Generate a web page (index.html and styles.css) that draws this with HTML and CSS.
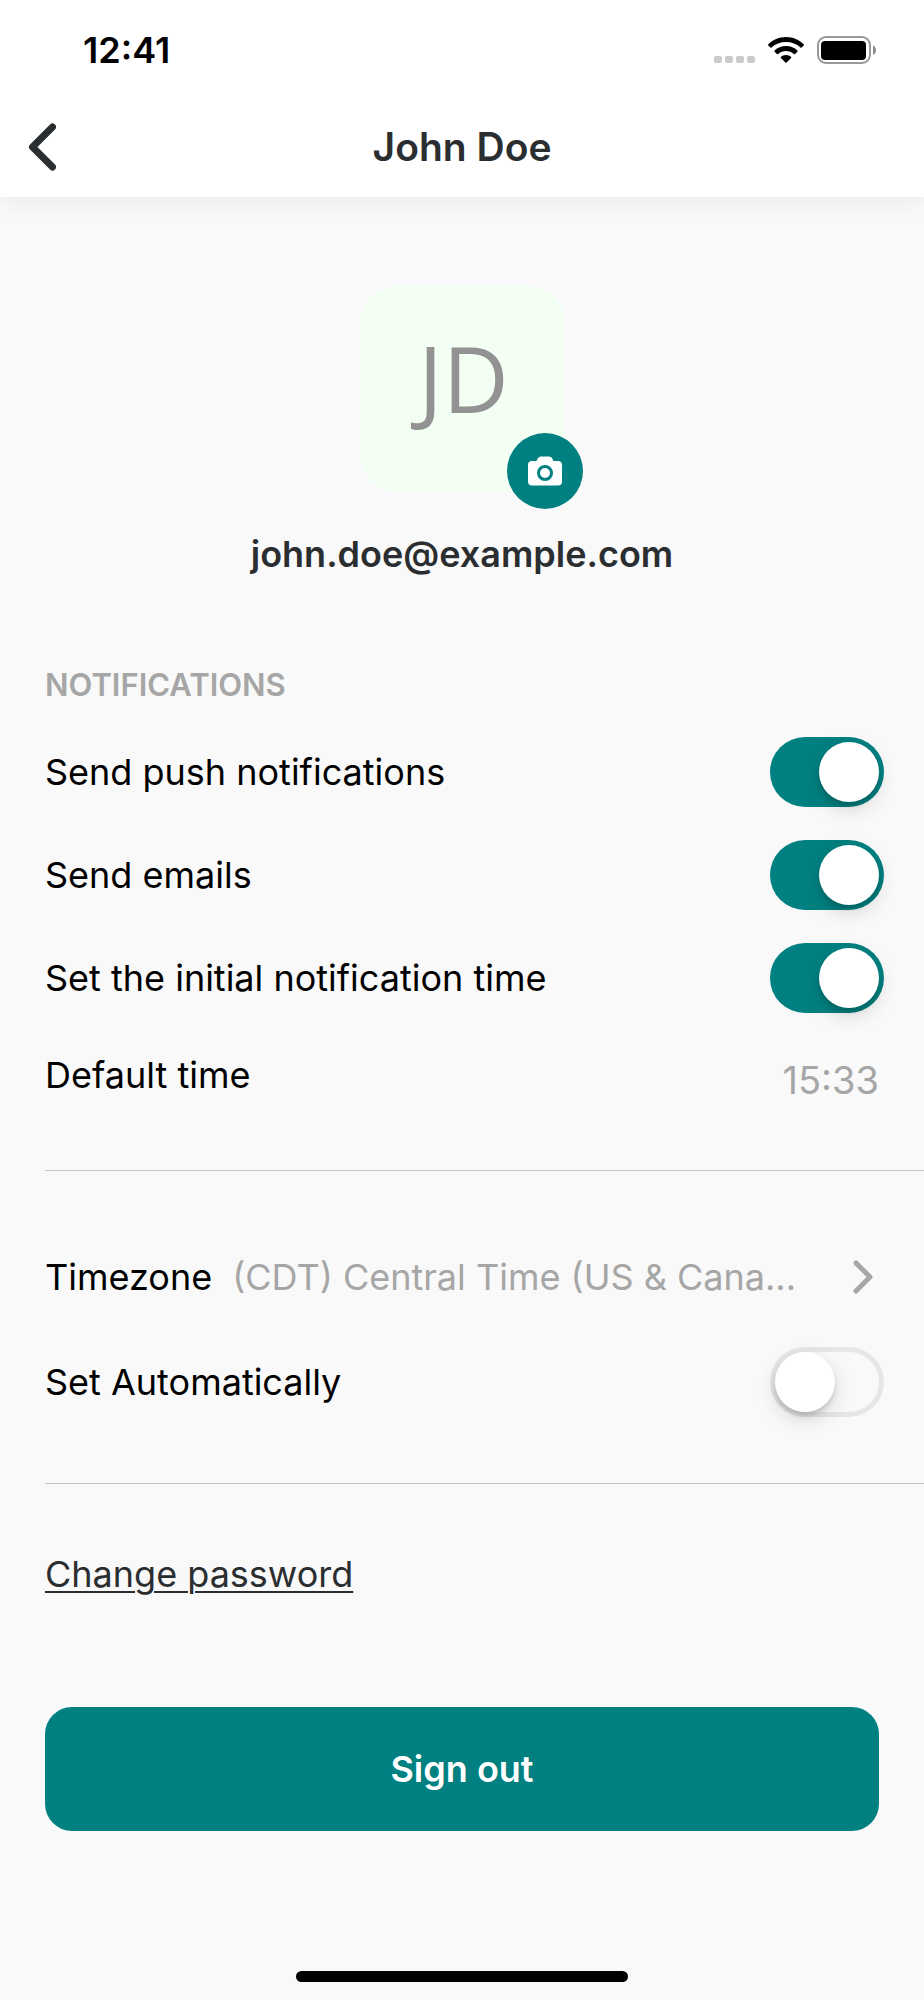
FILE: index.html
```html
<!DOCTYPE html>
<html lang="en">
<head>
<meta charset="utf-8">
<meta name="viewport" content="width=device-width, initial-scale=1">
<title>John Doe</title>
<link rel="stylesheet" href="styles.css">
</head>
<body>
<div class="screen">
  <header class="header">
    <div class="status">
      <time class="clock">12:41</time>
      <div class="status-icons">
        <svg class="signal" viewBox="0 0 41 28" aria-hidden="true"><g fill="#cbcbcb"><rect x="0" y="20" width="8" height="7" rx="2"/><rect x="11" y="20" width="8" height="7" rx="2"/><rect x="22" y="20" width="8" height="7" rx="2"/><rect x="33" y="20" width="8" height="7" rx="2"/></g></svg>
        <svg class="wifi" viewBox="0 0 36 28" aria-hidden="true"><path d="M18 1C11 1 4.800 3.800.3 8.300Q-.2 8.900.3 9.500L2.400 11.600Q3 12.100 3.600 11.600C7.400 8 12.500 6.100 18 6.100S28.600 8 32.400 11.600Q33 12.100 33.600 11.600L35.700 9.500Q36.200 8.900 35.700 8.300C31.200 3.800 25 1 18 1ZM18 10C13.500 10 9.500 11.700 6.600 14.500Q6.100 15.100 6.600 15.700L8.900 17.900Q9.500 18.400 10.100 17.900C12.200 16 15 14.900 18 14.900S23.800 16 25.900 17.900Q26.500 18.400 27.100 17.900L29.400 15.700Q29.900 15.100 29.400 14.500C26.500 11.700 22.500 10 18 10ZM18 19C16 19 14.200 19.700 12.900 20.900Q12.400 21.400 12.900 22L17.400 26.500Q18 27.100 18.600 26.500L23.100 22Q23.600 21.400 23.100 20.900C21.800 19.700 20 19 18 19Z"/></svg>
        <svg class="battery" viewBox="0 0 60 28" aria-hidden="true"><rect x="1" y="1" width="52" height="26" rx="8" fill="none" stroke="#999" stroke-width="2"/><rect x="4" y="5" width="45" height="19" rx="4"/><path d="M56 9.500Q59 11 59 14.200T56 19Z" fill="#8c8c8c"/></svg>
      </div>
    </div>
    <div class="navbar">
      <button class="back" type="button" aria-label="Back"><svg viewBox="0 0 28 48" aria-hidden="true"><path d="M24.500 4 4.500 24 24.500 44" fill="none" stroke="#2b2e31" stroke-width="7" stroke-linecap="round" stroke-linejoin="round"/></svg></button>
      <h1 class="title">John Doe</h1>
    </div>
  </header>
  <main class="content">
    <section class="profile">
      <div class="avatar">JD
        <button class="camera" type="button" aria-label="Change photo"><svg viewBox="0 0 34 30" aria-hidden="true"><path d="M4 5H8.500L10 2Q11 .5 13 .5H21Q23 .5 24 2L25.500 5H30Q34 5 34 9V25.500Q34 29.500 30 29.500H4Q0 29.500 0 25.500V9Q0 5 4 5Z" fill="#fff"/><circle cx="17" cy="17" r="6.500" fill="#fff" stroke="#008080" stroke-width="3"/></svg></button>
      </div>
      <p class="email">john.doe@example.com</p>
    </section>
    <section class="group notifications">
      <h2 class="heading">NOTIFICATIONS</h2>
      <label class="row">Send push notifications<input class="switch" type="checkbox" role="switch" checked></label>
      <label class="row">Send emails<input class="switch" type="checkbox" role="switch" checked></label>
      <label class="row">Set the initial notification time<input class="switch" type="checkbox" role="switch" checked></label>
      <button class="row default-time" type="button"><span>Default time</span><span class="time">15:33</span></button>
    </section>
    <section class="group region">
      <button class="row timezone" type="button"><span>Timezone</span><span class="zone">(CDT) Central Time (US &amp; Cana...</span><svg class="chevron" viewBox="0 0 20 34" aria-hidden="true"><path d="M3 3 17 17 3 31" fill="none" stroke="#a6a6a6" stroke-width="5" stroke-linecap="round" stroke-linejoin="round"/></svg></button>
      <label class="row">Set Automatically<input class="switch" type="checkbox" role="switch"></label>
    </section>
    <section class="actions">
      <a class="password" href="#password">Change password</a>
      <button class="signout" type="button">Sign out</button>
    </section>
  </main>
  <footer class="home"><div class="home-bar"></div></footer>
</div>
</body>
</html>
```
FILE: styles.css
```css
*, *::before { box-sizing: border-box; }
body {
  margin: 0;
  background: #f9f9f9;
  color: #000;
  font-family: Inter, "Liberation Sans", sans-serif;
  font-size: 36px;
  line-height: 44px;
}
button { margin: 0; padding: 0; border: 0; background: none; color: inherit; font: inherit; text-align: left; }
h1, h2, p { margin: 0; }
svg { display: block; flex: none; }
.screen { display: flex; flex-direction: column; min-height: 100vh; }
.header { background: #fff; box-shadow: 0 2px 24px rgba(0, 0, 0, 0.08); }
.status { display: flex; align-items: center; justify-content: space-between; height: 100px; padding: 0 47px 0 83px; }
.clock { font-weight: 600; }
.status-icons { display: flex; gap: 13px; }
.signal { width: 41px; height: 28px; }
.wifi { width: 36px; height: 28px; }
.battery { width: 60px; height: 28px; }
.navbar { display: grid; grid-template-columns: 84px 1fr 84px; align-items: center; height: 97px; padding-bottom: 4px; }
.back { padding-left: 28px; }
.back svg { width: 28px; height: 48px; }
.title { font-size: 39px; font-weight: 600; text-align: center; color: #2b2e31; }
.profile { display: flex; flex-direction: column; align-items: center; padding-top: 89px; }
.avatar {
  position: relative;
  width: 205px;
  height: 205px;
  padding: 36px 0 0 3px;
  border-radius: 36px;
  background: #f4fff4;
  color: #929292;
  font-family: "Open Sans", "Noto Sans", sans-serif;
  font-size: 91px;
  line-height: 112px;
  text-align: center;
}
.camera {
  position: absolute;
  right: -18px;
  bottom: -18px;
  display: grid;
  place-items: center;
  width: 76px;
  height: 76px;
  border-radius: 50%;
  background: #008080;
}
.camera svg { width: 34px; height: 30px; }
.email { margin-top: 41px; font-weight: 600; color: #2b2e31; }
.group { margin-left: 45px; padding-right: 40px; border-bottom: 1px solid #c6c6c6; }
.notifications { padding-top: 90px; padding-bottom: 49px; }
.heading { font-size: 31px; font-weight: 600; line-height: 38px; margin-bottom: 16px; color: #a6a6a6; }
.row { display: flex; align-items: center; justify-content: space-between; width: 100%; height: 103px; }
.default-time { height: 92px; }
.time { padding: 10px 5px 0 0; font-size: 38px; color: #a6a6a6; }
.region { padding-top: 53px; padding-bottom: 50px; }
.timezone { gap: 20px; padding-right: 11px; height: 106px; }
.zone { flex: 1; min-width: 0; overflow: hidden; text-overflow: ellipsis; white-space: nowrap; color: #a6a6a6; }
.chevron { width: 20px; height: 34px; }
.switch {
  appearance: none;
  display: flex;
  flex: none;
  width: 114px;
  height: 70px;
  margin: 0;
  padding: 5px;
  border-radius: 35px;
  box-shadow: inset 0 0 0 5px #e6e6e6;
}
.switch::before {
  content: "";
  width: 60px;
  height: 60px;
  border-radius: 50%;
  background: #fff;
  box-shadow: 0 7px 19px rgba(0, 0, 0, 0.15), 0 4px 4px rgba(0, 0, 0, 0.12);
}
.switch:checked { justify-content: flex-end; background: #008080; box-shadow: none; }
.actions { display: flex; flex-direction: column; align-items: flex-start; gap: 111px; padding: 68px 45px 0; }
.password { color: #2b2e31; text-decoration-thickness: 2px; text-underline-offset: 4px; }
.signout {
  width: 100%;
  padding: 40px;
  border-radius: 27px;
  background: #008080;
  color: #fff;
  font-weight: 600;
  text-align: center;
}
.home { display: flex; justify-content: center; margin-top: auto; padding-bottom: 18px; }
.home-bar { width: 36%; height: 11px; border-radius: 6px; background: #000; }
```
